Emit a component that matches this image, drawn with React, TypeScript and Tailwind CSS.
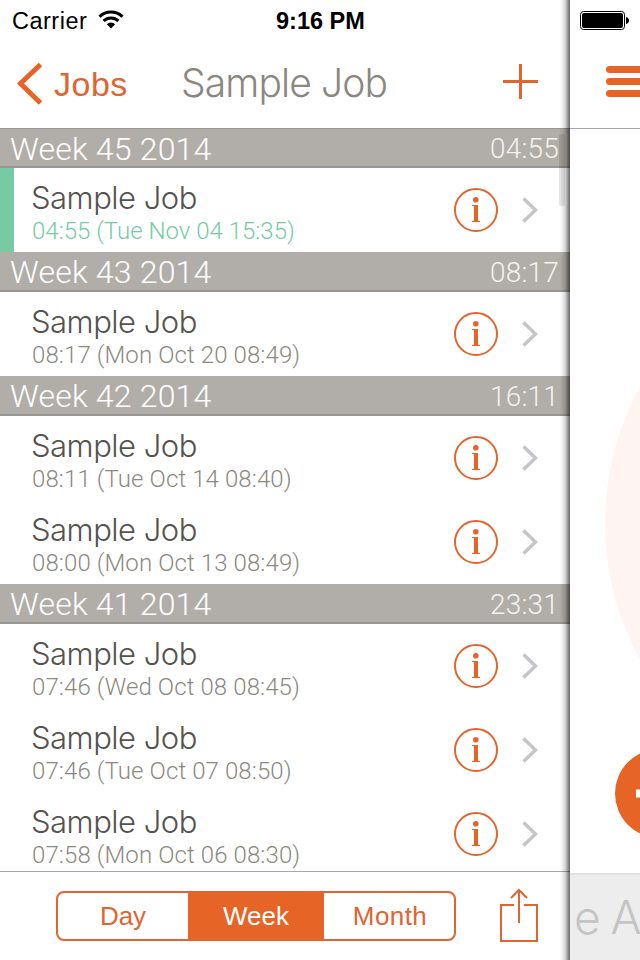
import clsx from "clsx";

const weeks = [
  {
    label: "Week 45 2014",
    total: "04:55",
    entries: [{ text: "04:55 (Tue Nov 04 15:35)", active: true }],
  },
  {
    label: "Week 43 2014",
    total: "08:17",
    entries: [{ text: "08:17 (Mon Oct 20 08:49)", active: false }],
  },
  {
    label: "Week 42 2014",
    total: "16:11",
    entries: [
      { text: "08:11 (Tue Oct 14 08:40)", active: false },
      { text: "08:00 (Mon Oct 13 08:49)", active: false },
    ],
  },
  {
    label: "Week 41 2014",
    total: "23:31",
    entries: [
      { text: "07:46 (Wed Oct 08 08:45)", active: false },
      { text: "07:46 (Tue Oct 07 08:50)", active: false },
      { text: "07:58 (Mon Oct 06 08:30)", active: false },
    ],
  },
];

const light = "font-['Inter',sans-serif] font-light";
const digits = "font-['Roboto',sans-serif] font-light";

function WifiIcon() {
  return (
    <svg width="26" height="20" viewBox="0 0 26 20" fill="none" stroke="#000" strokeWidth="3">
      <path d="M1.5 6.6A16.5 16.5 0 0 1 24.5 6.6" />
      <path d="M5.6 10.9A10.6 10.6 0 0 1 20.4 10.9" />
      <path d="M8.9 14.3A5.8 5.8 0 0 1 17.1 14.3L13 18.6Z" fill="#000" stroke="none" />
    </svg>
  );
}

function InfoIcon() {
  return (
    <svg width="44" height="44" viewBox="0 0 44 44" fill="none">
      <circle cx="22" cy="22" r="21" stroke="#e06530" strokeWidth="2" />
      <circle cx="21.8" cy="11.8" r="2.8" fill="#e66426" />
      <path d="M18 17H24V32.8L26 33V34H18V33L20 32.8V18.2L18 18Z" fill="#e66426" />
    </svg>
  );
}

function EntryRow({ text, active }: { text: string; active: boolean }) {
  return (
    <div className="flex h-[84px] shrink-0 items-center">
      <div className={clsx("h-full w-3.5 shrink-0", active && "bg-[#76cba3]")} />
      <div className="ml-[17px] flex-1 pt-1.5 whitespace-nowrap">
        <div className={clsx(light, "h-9 text-[31px] leading-9 tracking-[-0.5px] text-[#55534f]")}>
          Sample Job
        </div>
        <div
          className={clsx(
            digits,
            "h-[30px] pl-px text-[24px] leading-[30px]",
            active ? "text-[#76cba3]" : "tracking-[0.1px] text-[#8b8a80]",
          )}
        >
          {text}
        </div>
      </div>
      <InfoIcon />
      <svg className="mr-8 ml-6" width="16" height="26" viewBox="0 0 16 26" fill="none">
        <path d="M1.5 1.5L13.5 13L1.5 24.5" stroke="#c4c4c9" strokeWidth="3.4" />
      </svg>
    </div>
  );
}

function JobList() {
  return (
    <div className="relative flex h-[743px] flex-col overflow-hidden">
      {weeks.map((week) => (
        <section key={week.label} className="group shrink-0">
          <div
            className={clsx(
              digits,
              "flex h-10 items-center justify-between border-b-2 border-[#989692] bg-[#b1aea9] pr-[11px] pl-2.5 text-white group-first:border-t",
            )}
          >
            <span className="pt-0.5 text-[32px] leading-10 tracking-[0.2px]">{week.label}</span>
            <span className="pt-[3px] text-[28px] leading-10 tracking-[0.2px] text-[#f3f2ef]">{week.total}</span>
          </div>
          {week.entries.map((entry) => (
            <EntryRow key={entry.text} {...entry} />
          ))}
        </section>
      ))}
      {/* scroll indicator */}
      <div className="absolute top-1.5 right-[5px] h-[72px] w-1.5 rounded-xs bg-black/10" />
    </div>
  );
}

function LeftPanel() {
  return (
    <div className="relative flex h-full w-[570px] shrink-0 flex-col overflow-hidden bg-white">
      {/* status bar */}
      <div className="flex h-10 items-center font-['Liberation_Sans',Arial,sans-serif] text-[23.5px] text-black">
        <span className="w-[98px] pt-[3px] pl-3 tracking-[0.5px]">Carrier</span>
        <WifiIcon />
        <span className="ml-[152px] pt-[3px] font-bold whitespace-nowrap">9:16 PM</span>
      </div>

      {/* nav bar */}
      <div className="flex h-22 items-center">
        <svg className="ml-4 shrink-0" width="28" height="44" viewBox="0 0 28 44" fill="none">
          <path d="M24.5 2.5L4.5 21.5L24.5 41" stroke="#e66426" strokeWidth="5" />
        </svg>
        <span className="ml-2.5 w-[127px] font-['Liberation_Sans',Arial,sans-serif] text-[34px] tracking-[0.5px] text-[#e06530]">
          Jobs
        </span>
        <span
          className={clsx(light, "w-[322px] pb-0.5 text-[39px] tracking-[-0.9px] whitespace-nowrap text-[#8b8780]")}
        >
          Sample Job
        </span>
        <svg className="mb-1 shrink-0" width="36" height="36" viewBox="0 0 36 36" stroke="#e06530" strokeWidth="3">
          <path d="M0 17.5H35M17.5 0V35" />
        </svg>
      </div>

      <JobList />

      {/* toolbar */}
      <div className="flex flex-1 items-center border-t border-[#aaa8a4]">
        <div className="ml-14 flex h-[50px] w-[400px] overflow-hidden rounded-lg border-2 border-[#e06530] text-center font-['Liberation_Sans',Arial,sans-serif] text-[26px] leading-[47px] text-[#e06530]">
          <span className="w-[130px]">Day</span>
          <span className="w-[136px] bg-[#e66426] text-white">Week</span>
          <span className="flex-1 pl-0.5 tracking-[0.4px]">Month</span>
        </div>
        <svg className="mb-0.5 ml-11" width="40" height="54" viewBox="0 0 40 54" fill="none" stroke="#e06530" strokeWidth="2">
          <path d="M14 17H1V53H37V17H24" />
          <path d="M19 35V2M11 10L19 2L27 10" />
        </svg>
      </div>

      {/* edge shadow */}
      <div className="absolute inset-y-0 right-0 w-2.5 bg-linear-to-r from-transparent via-black/15 to-black/60" />
    </div>
  );
}

function RightPanel() {
  return (
    <div className="flex h-full w-[70px] shrink-0 flex-col overflow-hidden bg-white">
      <div className="flex h-10 items-center pl-2.5">
        <svg width="50" height="20" viewBox="0 0 50 20" fill="none">
          <rect x="0.5" y="1.5" width="44" height="18" rx="3" stroke="#000" />
          <rect x="2" y="3" width="41" height="15" rx="2" fill="#000" />
          <path d="M46 7Q49 8 49 10.5T46 14Z" fill="#000" />
        </svg>
      </div>
      <div className="flex h-[89px] flex-col gap-[5px] border-b border-[#aaa8a4] pt-[26px] pl-9">
        <div className="h-[7px] w-12 rounded-full bg-[#e66426]" />
        <div className="h-[7px] w-12 rounded-full bg-[#e66426]" />
        <div className="h-[7px] w-12 rounded-full bg-[#e66426]" />
      </div>
      <svg className="shrink-0" width="70" height="744" viewBox="0 0 70 744">
        <circle cx="318" cy="394" r="283" fill="#fef5f2" />
        <circle cx="89.5" cy="664.5" r="44.5" fill="#e66426" />
        <rect x="66" y="660.5" width="47" height="8" fill="#fff" />
      </svg>
      <div className="flex flex-1 items-center overflow-hidden border-t-2 border-[#e0e0e0] bg-[#ededed]">
        <span className={clsx(light, "ml-1 text-[46px] tracking-[-1.5px] whitespace-nowrap text-[#c4c4c4]")}>e A</span>
      </div>
    </div>
  );
}

export default function App() {
  return (
    <div className="flex h-[960px] w-[640px] overflow-hidden bg-white">
      <LeftPanel />
      <RightPanel />
    </div>
  );
}
